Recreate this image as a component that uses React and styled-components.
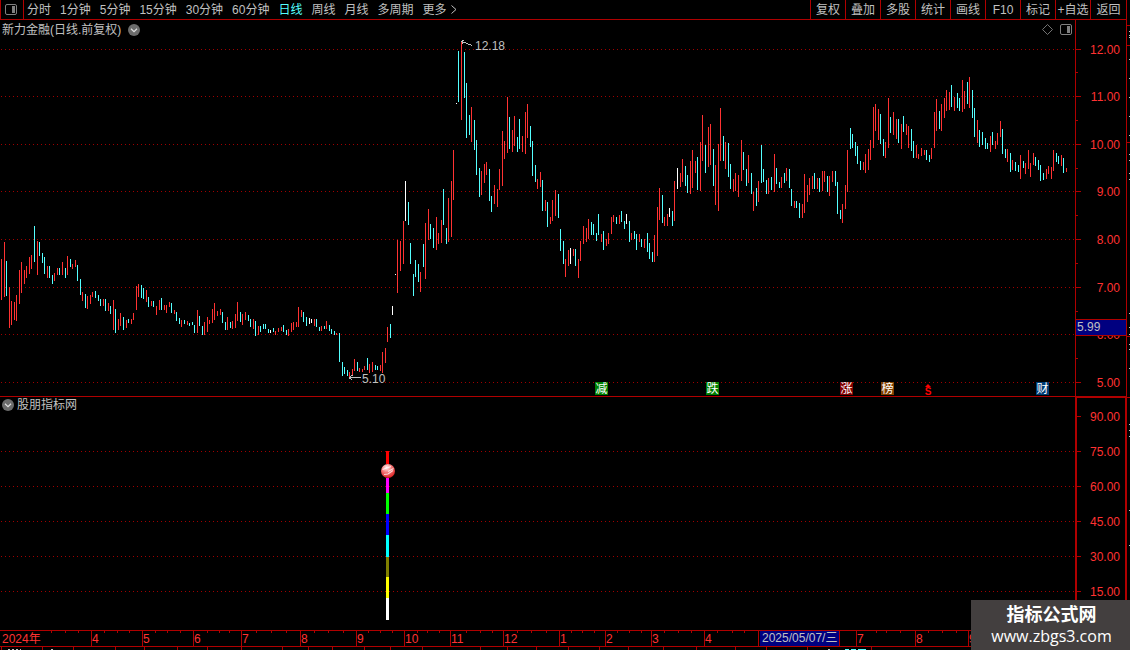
import styled, { createGlobalStyle, css } from "styled-components";

const RED = "#b00000";
const LABEL = "#ff3232";
const CYAN = "#54ffff";
const GREY = "#c0c0c0";

const GlobalStyle = createGlobalStyle`
  * {
    box-sizing: border-box;
  }
  body {
    margin: 0;
    background: #000;
    color: ${GREY};
    font-family: "Liberation Sans", "Noto Sans CJK SC", sans-serif;
    font-size: 12px;
  }
  button {
    margin: 0;
    padding: 0;
    border: 0;
    background: none;
    color: inherit;
    font: inherit;
    line-height: 18px;
    white-space: nowrap;
    cursor: pointer;
  }
`;

const Page = styled.div`
  display: flex;
  height: 100vh;
  min-height: 400px;
  overflow: hidden;
`;
const Main = styled.main`
  flex: 1;
  min-width: 0;
  display: grid;
  grid-template-rows: 20px minmax(0, 377fr) minmax(0, 233fr) 17px 3px;
`;
const Toolbar = styled.nav`
  display: flex;
  min-width: 0;
  border-bottom: 1px solid ${RED};
  border-left: 1px solid ${RED};
`;
const LayoutButton = styled.button`
  width: 23px;
  flex: none;
  display: flex;
  align-items: center;
  padding-left: 4px;
  border-right: 1px solid ${RED};
`;
const Periods = styled.div`
  flex: 1;
  min-width: 0;
  overflow: hidden;
  display: flex;
  gap: 9px;
  padding-left: 3px;
`;
const Period = styled.button`
  display: flex;
  align-items: center;
  gap: 4px;
  color: ${props => props.$active ? CYAN : GREY};
`;
const Tools = styled.div`
  flex: none;
  display: flex;
`;
const Tool = styled.button`
  width: 35px;
  border-left: 1px solid ${RED};
  &:last-child {
    width: 36px;
  }
`;
const Panel = styled.section`
  min-height: 0;
  display: grid;
  grid-template-columns: minmax(0, 1fr) 51px;
  ${props => props.$divided && css`
    border-bottom: 1px solid ${RED};
  `}
`;
const Plot = styled.div`
  min-height: 0;
  display: flex;
  flex-direction: column;
`;
const PlotHeader = styled.header`
  flex: none;
  height: ${props => props.$height}px;
  display: flex;
  align-items: center;
  gap: ${props => props.$gap}px;
  padding: 0 3px 0 2px;
`;
const Title = styled.h2`
  margin: 0;
  font-size: 12px;
  font-weight: 400;
  line-height: 16px;
  white-space: nowrap;
`;
const IconButton = styled.button`
  display: flex;
`;
const HeaderIcons = styled.div`
  display: flex;
  gap: 6px;
  margin-left: auto;
`;
const Drawing = styled.svg`
  display: block;
  flex: 1;
  width: 100%;
  height: 100%;
  min-height: 0;
  font-family: "Liberation Sans", "Noto Sans CJK SC", sans-serif;
  font-size: 12px;
`;
const Axis = styled.div`
  min-height: 0;
  overflow: hidden;
  border-left: 1px solid ${RED};
  ${props => props.$framed && css`
    border-width: 1px 1px 0 2px;
    border-style: solid;
    border-color: ${RED};
  `}
`;
const TimeAxis = styled.div`
  min-height: 0;
  overflow: hidden;
  border-top: 1px solid ${RED};
  border-bottom: 1px solid ${RED};
`;
const Sidebar = styled.aside`
  flex: none;
  width: 4px;
  border-left: 1px solid ${RED};
`;
const Watermark = styled.div`
  position: absolute;
  right: 0;
  bottom: 0;
  width: 159px;
  height: 50px;
  padding: 4px 0 0 2px;
  background: #433f3f;
  color: #fff;
  text-align: center;
`;
const SiteName = styled.div`
  font-size: 18px;
  font-weight: 700;
  line-height: 22px;
`;
const SiteUrl = styled.div`
  font-family: "Open Sans", "Noto Sans", sans-serif;
  font-size: 16px;
  line-height: 20px;
`;

//------------------------------------------------DATA------------------------------------------------

const PERIODS = ["分时", "1分钟", "5分钟", "15分钟", "30分钟", "60分钟", "日线", "周线", "月线", "多周期"];
const TOOLS = ["复权", "叠加", "多股", "统计", "画线", "F10", "标记", "+自选", "返回"];

// x top bottom, r = up, c = down, w = unchanged
const BARS = `
1 259 300 r,4 242 297 r,6 261 296 c,9 287 328 r,11 301 325 r,14 302 320 r,16 295 321 r,19 270 304 r,
21 262 293 r,24 270 284 r,26 266 278 r,29 257 274 r,31 255 269 r,34 226 262 c,37 241 275 r,39 242 256 c,
42 253 263 c,44 257 274 c,47 266 278 r,49 266 278 c,52 275 284 c,54 273 281 r,57 268 275 r,59 268 275 c,
62 262 275 r,65 268 278 c,67 256 275 r,70 259 267 c,72 264 269 r,75 260 267 r,77 265 281 c,80 279 295 c,
82 292 301 r,85 294 308 c,87 296 309 r,90 295 304 r,92 292 297 r,95 291 298 c,98 295 301 c,100 299 306 c,
103 299 306 r,105 299 311 c,108 303 311 r,110 306 314 c,113 300 330 r,115 309 333 c,118 319 330 r,120 313 326 r,
123 317 330 c,126 320 328 r,128 319 323 c,131 319 324 r,133 313 320 r,136 286 310 r,138 284 297 r,141 285 298 c,
143 288 299 c,146 290 302 r,148 297 307 c,151 301 306 r,153 301 307 c,156 306 315 r,159 300 310 r,161 298 310 c,
164 305 310 r,166 305 313 r,169 302 307 r,171 303 313 c,174 310 314 r,176 312 321 c,179 318 324 c,181 320 327 r,
184 320 324 c,187 321 325 r,189 323 326 c,192 322 325 c,194 325 333 c,197 310 333 r,199 316 326 c,202 326 335 c,
204 322 335 r,207 317 332 r,209 320 324 r,212 309 323 r,214 303 320 r,217 311 316 r,220 309 315 r,222 312 323 c,
225 322 330 c,227 317 330 r,230 322 328 c,232 321 329 r,235 314 328 r,237 302 321 r,240 312 322 c,242 314 325 r,
245 312 320 r,248 315 321 c,250 319 327 c,253 319 329 r,255 321 336 c,258 326 335 r,260 326 332 c,263 324 329 c,
265 324 329 c,268 329 333 c,270 330 333 w,273 328 332 c,275 331 335 r,278 328 332 r,281 327 331 r,283 325 332 c,
286 330 335 c,288 329 336 r,291 323 332 r,293 322 330 r,296 322 327 r,298 307 327 r,301 310 317 r,303 312 322 c,
306 317 326 c,309 318 324 w,311 319 323 w,314 319 326 r,316 319 327 c,319 327 331 c,321 326 331 r,324 326 329 c,
326 321 329 r,329 325 331 c,331 329 334 c,334 331 335 c,336 333 335 r,339 333 362 c,342 362 376 c,344 367 374 c,
347 370 376 c,349 372 377 r,352 369 376 r,354 359 371 r,357 362 371 c,359 368 372 r,362 369 372 r,364 366 370 r,
367 358 370 c,369 364 373 r,372 362 372 r,375 365 370 c,377 366 370 c,380 365 371 r,382 352 373 r,385 348 363 r,
387 327 342 r,390 324 338 c,392 306 315 w,395 274 275 w,397 240 293 r,400 241 271 r,403 221 264 r,405 181 221 w,
408 202 225 c,410 243 264 c,413 274 296 c,415 260 277 c,418 264 282 c,420 272 292 r,423 244 267 c,425 223 279 r,
428 209 240 r,430 224 239 c,433 228 248 c,436 217 250 r,438 233 244 r,441 220 243 r,443 189 225 c,446 228 244 c,
448 198 242 r,451 181 237 r,453 150 200 r,456 103 104 w,458 51 102 c,461 42 120 r,464 52 98 c,466 83 138 c,
469 115 135 c,471 107 142 r,474 120 150 c,476 140 175 c,479 168 197 c,481 171 195 r,484 164 183 r,486 162 175 r,
489 169 201 c,491 196 212 c,494 185 204 r,497 189 207 r,499 169 190 r,502 131 186 r,504 141 159 r,507 97 153 r,
509 117 149 c,512 130 152 r,514 116 146 r,517 137 152 c,519 119 149 c,522 136 152 r,525 112 154 r,527 104 138 r,
530 126 147 c,532 141 176 c,535 165 182 c,537 179 189 r,540 172 187 r,542 180 211 c,545 200 211 r,547 202 227 c,
550 217 224 r,552 200 221 r,555 190 216 r,558 194 218 c,560 229 251 c,563 241 264 c,565 259 277 r,568 250 266 r,
570 248 264 w,573 249 256 r,575 249 266 c,578 259 278 r,580 241 261 r,583 226 244 r,586 228 242 r,588 219 239 r,
591 222 235 c,593 224 235 c,596 233 241 c,598 214 235 c,601 234 242 r,603 231 250 c,606 239 246 r,608 233 244 r,
611 217 234 r,613 215 222 r,616 217 224 c,619 215 224 r,621 211 222 c,624 221 229 c,626 214 224 w,629 221 242 c,
631 233 240 r,634 231 239 c,636 234 250 c,639 234 242 r,641 239 247 c,644 239 248 r,647 233 252 c,649 243 259 c,
652 252 262 c,654 235 262 r,657 207 256 r,659 188 220 r,662 195 223 c,664 217 226 r,667 214 226 r,669 208 217 w,
672 211 226 c,674 181 221 r,677 168 189 w,680 173 187 r,682 159 182 r,685 166 186 c,687 175 193 c,690 161 194 r,
692 150 188 r,695 161 173 r,697 157 190 c,700 142 191 r,702 115 161 r,705 145 173 c,708 127 167 r,710 124 165 r,
713 149 186 c,715 165 205 r,718 144 211 r,720 108 161 r,723 136 161 c,725 142 169 r,728 143 177 c,730 164 189 c,
733 179 192 r,735 173 191 r,738 175 197 r,741 140 181 r,743 152 170 c,746 169 186 c,748 155 183 r,751 173 194 c,
753 192 211 r,756 188 206 c,758 181 202 r,761 145 183 c,763 169 182 c,766 180 194 c,768 178 194 r,771 177 190 c,
774 154 192 r,776 168 184 c,779 182 188 c,781 177 188 r,784 173 183 c,786 168 181 r,789 169 188 c,791 189 206 c,
794 201 208 r,796 201 208 c,799 203 218 c,802 204 218 r,804 174 213 r,807 185 202 r,809 178 195 r,812 176 189 r,
814 173 189 c,817 178 189 r,819 178 192 c,822 171 191 r,824 171 182 r,827 176 192 c,829 176 196 r,832 171 182 r,
835 171 186 c,837 182 214 c,840 210 219 c,842 204 223 r,845 185 209 r,847 150 192 r,850 128 149 c,852 134 148 c,
855 142 156 c,857 146 164 c,860 161 170 c,863 162 170 r,865 154 173 r,868 149 170 r,870 140 160 r,873 107 148 r,
875 104 131 r,878 109 140 r,880 114 144 c,883 139 156 c,885 142 158 r,888 98 148 r,890 117 133 c,893 112 135 r,
896 119 139 r,898 119 143 c,901 124 149 r,903 116 132 c,906 124 135 r,908 126 148 r,911 129 151 c,913 141 158 c,
916 145 158 r,918 154 159 r,921 148 156 r,924 150 155 r,926 150 160 c,929 155 162 c,931 148 159 r,934 112 148 r,
936 99 131 r,939 111 129 c,941 104 131 r,944 98 118 r,946 90 111 r,949 92 110 r,951 85 107 c,954 97 111 r,
957 93 108 c,959 98 111 c,962 80 112 r,964 91 109 r,967 82 104 c,969 77 108 r,972 90 118 c,974 108 137 c,
977 120 143 r,979 130 147 c,982 132 145 c,985 138 149 c,987 143 149 c,990 136 152 r,992 132 145 c,995 141 149 r,
997 133 145 r,1000 121 137 r,1002 129 154 c,1005 149 158 c,1007 149 162 r,1010 153 172 c,1012 160 170 r,1015 162 171 c,
1018 165 172 c,1020 155 179 r,1023 161 168 c,1025 163 174 r,1028 150 169 r,1030 163 177 r,1033 153 165 r,1035 157 166 c,
1038 160 170 c,1040 165 181 c,1043 173 180 c,1046 169 179 r,1048 166 174 r,1051 167 179 r,1053 150 171 r,1056 153 162 c,
1058 156 164 c,1061 155 166 r,1063 158 173 c,1066 168 172 r
`.trim().split(",").map(row => row.trim().split(" "));

const BAR_COLORS = { r: LABEL, c: CYAN, w: "#fff" };

const PRICE_LEVELS = [
  { y: 49, label: "12.00" },
  { y: 96, label: "11.00" },
  { y: 144, label: "10.00" },
  { y: 191, label: "9.00" },
  { y: 239, label: "8.00" },
  { y: 287, label: "7.00" },
  { y: 334, label: "6.00" },
  { y: 382, label: "5.00" },
];
const INDICATOR_LEVELS = [
  { y: 416, label: "90.00" },
  { y: 451, label: "75.00" },
  { y: 486, label: "60.00" },
  { y: 521, label: "45.00" },
  { y: 556, label: "30.00" },
  { y: 591, label: "15.00" },
];
const EVENTS = [
  { x: 595, text: "减", color: "#008000" },
  { x: 706, text: "跌", color: "#008000" },
  { x: 840, text: "涨", color: "#800000" },
  { x: 881, text: "榜", color: "#804000" },
  { x: 1036, text: "财", color: "#003c74" },
];
const STICK = [
  { y: 451, h: 13, color: "#f00" },
  { y: 478, h: 15, color: "#f0f" },
  { y: 493, h: 21, color: "#0f0" },
  { y: 514, h: 21, color: "#00f" },
  { y: 535, h: 22, color: "#0ff" },
  { y: 557, h: 20, color: "#808000" },
  { y: 577, h: 21, color: "#ff0" },
  { y: 598, h: 22, color: "#fff" },
];
// the month under the date cursor has no label
const MONTHS = [
  [91, "4"], [142, "5"], [193, "6"], [241, "7"], [300, "8"], [356, "9"], [404, "10"], [450, "11"],
  [503, "12"], [559, "1"], [605, "2"], [651, "3"], [704, "4"], [758, ""], [856, "7"], [915, "8"], [968, "9"],
];
const WEEKS = [
  51, 65, 78, 104, 117, 129, 155, 167, 180, 207, 219, 229, 256, 271, 286, 314, 328, 343, 368, 380, 392,
  417, 427, 439, 466, 480, 492, 517, 531, 546, 571, 582, 594, 617, 629, 641, 664, 678, 691, 717, 732, 744,
  876, 886, 900, 928, 942, 956,
];
const TABS = [
  1, 42, 73, 115, 144, 177, 207, 241, 282, 308, 332, 364, 390, 422, 480, 507, 536, 568, 599, 628, 663, 696,
  735, 766, 807, 871,
];
const SIDE_LINES = [25, 45, 142, 336, 397];
const SIDE_MARKS = [31, 35, 37, 59, 78, 97, 116, 135, 154, 160, 173, 179, 313, 327, 334, 344, 349, 368, 424, 430, 436, 510, 545];

//------------------------------------------------PARTS------------------------------------------------

const LayoutIcon = () => (
  <svg width="12" height="11" viewBox="0 0 12 11" aria-hidden="true">
    <rect x="0.5" y="0.5" width="11" height="10" rx="1.5" fill="none" stroke="#808080" />
    <rect x="7" y="2" width="3" height="7" fill="#808080" />
  </svg>
);

const ChevronIcon = () => (
  <svg width="12" height="12" viewBox="0 0 12 12" aria-hidden="true">
    <circle cx="6" cy="6" r="6" fill="#6c6c6c" />
    <path d="M3 4.8 L6 7.6 L9 4.8" fill="none" stroke="#e0e0e0" strokeWidth="1.2" />
  </svg>
);

const DiamondIcon = () => (
  <svg width="12" height="11" viewBox="0 0 12 11" aria-hidden="true">
    <path d="M5.5 0.5 L10.5 5.5 L5.5 10.5 L0.5 5.5 Z" fill="none" stroke="#808080" strokeWidth="0.9" />
  </svg>
);

const GridLines = ({ levels }) => levels.map(level => (
  <line key={level.y} x1="1" x2="1075" y1={level.y + 0.5} y2={level.y + 0.5}
    stroke="#a00000" strokeDasharray="1 3" shapeRendering="crispEdges" />
));

const Scale = ({ levels, children, ...rest }) => (
  <Drawing preserveAspectRatio="none" {...rest}>
    {levels.map(level => (
      <g key={level.y}>
        <rect x="1076" y={level.y} width="5" height="1" fill={RED} />
        <text x="1120" y={level.y + 5} textAnchor="end" fill={LABEL}>{level.label}</text>
      </g>
    ))}
    {children}
  </Drawing>
);

const PriceChart = () => (
  <Drawing viewBox="0 39 1075 357" preserveAspectRatio="none" role="img" aria-label="新力金融 日线">
    <GridLines levels={PRICE_LEVELS} />
    {BARS.map(([x, top, bottom, kind]) => (
      <rect key={x} x={x} y={top} width="1" height={bottom - top} fill={BAR_COLORS[kind]} />
    ))}
    <g fill="none" stroke={GREY} shapeRendering="crispEdges">
      <path d="M461.5 41.5 L472.5 45.5 M461.5 41.5 L464.5 39.5 M461.5 41.5 L463.5 44.5" />
      <path d="M349 377.5 H361 M349 377.5 L352.5 375 M349 377.5 L352.5 380.5" />
    </g>
    <text x="475" y="50" fill={GREY}>12.18</text>
    <text x="362" y="383" fill={GREY}>5.10</text>
    {EVENTS.map(event => (
      <g key={event.x}>
        <rect x={event.x} y="382" width="13" height="13" fill={event.color} />
        <text x={event.x + 0.5} y="393" fill="#fff">{event.text}</text>
      </g>
    ))}
    <path d="M928 384 L925 387 H931 Z" fill="#f00" />
    <text x="928" y="395" textAnchor="middle" fontSize="10" fontWeight="700" fill="#f00">S</text>
  </Drawing>
);

const PriceScale = () => (
  <Scale levels={PRICE_LEVELS} viewBox="1076 20 50 376">
    {[72, 120, 168, 215, 263, 311, 358].map(y => (
      <rect key={y} x="1076" y={y} width="2" height="1" fill={RED} />
    ))}
    <rect x="1076" y="319" width="50" height="17" fill={RED} />
    <rect x="1076" y="320" width="50" height="15" fill="#000080" />
    <text x="1077" y="331" fill={GREY}>5.99</text>
  </Scale>
);

const IndicatorChart = () => (
  <Drawing viewBox="0 413 1075 217" preserveAspectRatio="none" role="img" aria-label="股朋指标网">
    <defs>
      <radialGradient id="ball" cx="0.4" cy="0.25" r="0.8">
        <stop offset="0" stopColor="#fff0f0" />
        <stop offset="0.45" stopColor="#f47878" />
        <stop offset="1" stopColor="#d81818" />
      </radialGradient>
    </defs>
    <GridLines levels={INDICATOR_LEVELS.slice(1)} />
    {STICK.map(part => (
      <rect key={part.y} x="386" y={part.y} width="3" height={part.h} fill={part.color} />
    ))}
    <circle cx="388" cy="471" r="7" fill="url(#ball)" />
    <path d="M382.5 469.5 L391 466.5 M388 471.5 L393.5 468.5 M384 474.5 L388 474 L393 470.5"
      fill="none" stroke="#fff" strokeOpacity="0.75" strokeWidth="1.2" />
  </Drawing>
);

const TimeScale = () => (
  <Drawing viewBox="0 631 1126 15" preserveAspectRatio="none" role="img" aria-label="2024年">
    {WEEKS.map(x => <rect key={x} x={x} y="631" width="1" height="2" fill={RED} />)}
    <text x="2" y="643" fill={LABEL}>2024年</text>
    {MONTHS.map(([x, label]) => (
      <g key={x}>
        <rect x={x} y="631" width="1" height="15" fill={RED} />
        {label && <text x={x + 1} y="643" fill={LABEL}>{label}</text>}
      </g>
    ))}
    <rect x="760" y="631" width="79" height="15" fill="#000080" />
    <text x="762" y="642" fill={GREY}>2025/05/07/三</text>
    <rect x="839" y="631" width="1" height="15" fill={RED} />
  </Drawing>
);

const TabEdge = () => (
  <Drawing viewBox="0 647 1126 3" preserveAspectRatio="none" aria-hidden="true">
    {TABS.map(x => <rect key={x} x={x} y="647" width="1" height="3" fill={RED} />)}
    <path d="M8 649.5 H21 M51 649.5 H53 M828 649.5 H830" stroke={GREY} strokeDasharray="2 2" />
    <path d="M845 649.5 H849 M851 649.5 H856 M858 649.5 H866" stroke={CYAN} />
  </Drawing>
);

const App = () => {
  return <>
    <GlobalStyle />
    <Page>
      <Main>
        <Toolbar>
          <LayoutButton aria-label="布局"><LayoutIcon /></LayoutButton>
          <Periods>
            {PERIODS.map(name => <Period key={name} $active={name === "日线"}>{name}</Period>)}
            <Period>
              更多
              <svg width="6" height="9" viewBox="0 0 6 9" aria-hidden="true">
                <path d="M0.5 0.5 L5 4.5 L0.5 8.5" fill="none" stroke={GREY} />
              </svg>
            </Period>
          </Periods>
          <Tools>
            {TOOLS.map(name => <Tool key={name}>{name}</Tool>)}
          </Tools>
        </Toolbar>
        <Panel $divided>
          <Plot>
            <PlotHeader $height={19} $gap={7}>
              <Title>新力金融(日线.前复权)</Title>
              <IconButton aria-label="展开"><ChevronIcon /></IconButton>
              <HeaderIcons>
                <IconButton aria-label="标记"><DiamondIcon /></IconButton>
                <IconButton aria-label="侧栏"><LayoutIcon /></IconButton>
              </HeaderIcons>
            </PlotHeader>
            <PriceChart />
          </Plot>
          <Axis><PriceScale /></Axis>
        </Panel>
        <Panel>
          <Plot>
            <PlotHeader $height={16} $gap={3}>
              <IconButton aria-label="展开"><ChevronIcon /></IconButton>
              <Title>股朋指标网</Title>
            </PlotHeader>
            <IndicatorChart />
          </Plot>
          <Axis $framed>
            <Scale levels={INDICATOR_LEVELS} viewBox="1077 398 48 232" />
          </Axis>
        </Panel>
        <TimeAxis><TimeScale /></TimeAxis>
        <TabEdge />
      </Main>
      <Sidebar>
        <Drawing viewBox="1127 0 3 650" preserveAspectRatio="none" aria-hidden="true">
          {SIDE_LINES.map(y => <rect key={y} x="1127" y={y} width="3" height="1" fill={RED} />)}
          {SIDE_MARKS.map(y => <rect key={y} x="1129" y={y} width="1" height="1" fill={GREY} />)}
        </Drawing>
      </Sidebar>
      <Watermark>
        <SiteName>指标公式网</SiteName>
        <SiteUrl>www.zbgs3.com</SiteUrl>
      </Watermark>
    </Page>
  </>
}

export default App;
